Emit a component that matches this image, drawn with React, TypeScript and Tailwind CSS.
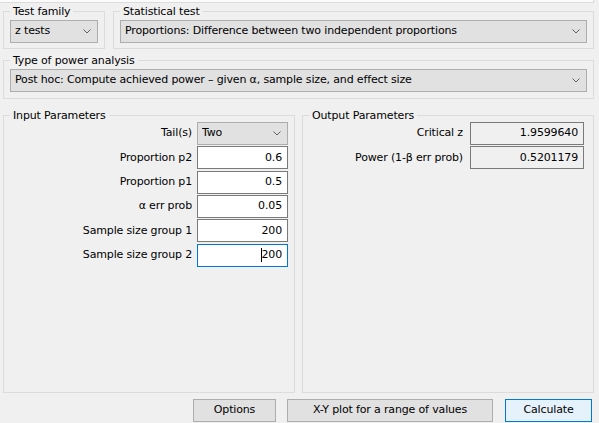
import React from "react"

const font = { fontFamily: '"DejaVu Sans", Tahoma, sans-serif' }

function Chevron() {
  return (
    <svg width="8" height="5" viewBox="0 0 8 5" className="shrink-0">
      <path d="M0.5 0.5 L4 4 L7.5 0.5" fill="none" stroke="#606060" strokeWidth="1" />
    </svg>
  )
}

function Combo({ value, className = "" }: { value: string; className?: string }) {
  return (
    <div
      className={`flex h-[23px] items-center justify-between border border-[#adadad] bg-[#e1e1e1] pl-[4px] pr-[6px] ${className}`}
    >
      <span className="truncate">{value}</span>
      <Chevron />
    </div>
  )
}

function Group({ title, className = "", children }: { title: string; className?: string; children: React.ReactNode }) {
  return (
    <fieldset className={`border border-[#dcdcdc] px-[6px] ${className}`}>
      <legend className="px-[3px] leading-[13px]">{title}</legend>
      {children}
    </fieldset>
  )
}

function Field({ value, focused = false }: { value: string; focused?: boolean }) {
  return (
    <div
      className={`flex h-[23px] items-center justify-end bg-white pr-[5px] ${
        focused ? "border border-[#0078d7]" : "border border-[#7a7a7a]"
      }`}
    >
      {focused && <span className="mr-[-1px] h-[14px] border-l border-black" />}
      <span>{value}</span>
    </div>
  )
}

function OutField({ value }: { value: string }) {
  return (
    <div className="flex h-[23px] items-center justify-end border border-[#7a7a7a] bg-[#f0f0f0] pr-[5px]">
      {value}
    </div>
  )
}

const inputs: [string, string][] = [
  ["Proportion p2", "0.6"],
  ["Proportion p1", "0.5"],
  ["α err prob", "0.05"],
  ["Sample size group 1", "200"],
]

export default function App() {
  return (
    <div
      style={font}
      className="flex h-[423px] w-[599px] flex-col bg-[#f0f0f0] text-[11px] tracking-[-0.15px] text-black"
    >
      <div className="mr-[5px] h-[3px] border-b border-r border-[#dcdcdc] bg-[#fbfbfb]" />

      <div className="mt-[2px] flex gap-[8px] pl-[3px] pr-[5px]">
        <Group title="Test family" className="w-[102px] pb-[5px]">
          <Combo value="z tests" className="mt-[2px]" />
        </Group>
        <Group title="Statistical test" className="flex-1 pb-[5px]">
          <Combo value="Proportions: Difference between two independent proportions" className="mt-[2px]" />
        </Group>
      </div>

      <div className="mt-[5px] pl-[3px] pr-[5px]">
        <Group title="Type of power analysis" className="pb-[6px]">
          <Combo
            value="Post hoc: Compute achieved power – given α, sample size, and effect size"
            className="mt-[2px]"
          />
        </Group>
      </div>

      <div className="mt-[10px] grid grid-cols-2 gap-[7px] pl-[3px] pr-[5px]">
        <Group title="Input Parameters" className="h-[284px]">
          <div className="grid grid-cols-[1fr_91px] items-center gap-x-[5px] gap-y-[1.33px]">
            <span className="text-right">Tail(s)</span>
            <Combo value="Two" />
            {inputs.map(([label, value]) => (
              <React.Fragment key={label}>
                <span className="text-right">{label}</span>
                <Field value={value} />
              </React.Fragment>
            ))}
            <span className="text-right">Sample size group 2</span>
            <Field value="200" focused />
          </div>
        </Group>
        <Group title="Output Parameters" className="h-[284px]">
          <div className="grid grid-cols-[1fr_114px] items-center gap-x-[7px] gap-y-[1.33px] pr-[3px]">
            <span className="text-right">Critical z</span>
            <OutField value="1.9599640" />
            <span className="text-right">Power (1-β err prob)</span>
            <OutField value="0.5201179" />
          </div>
        </Group>
      </div>

      <div className="mt-[6px] flex justify-end pr-[7px]">
        <button className="h-[23px] w-[83px] border border-[#adadad] bg-[#e1e1e1]">Options</button>
        <button className="ml-[11px] h-[23px] w-[206px] border border-[#adadad] bg-[#e1e1e1]">
          X-Y plot for a range of values
        </button>
        <button className="ml-[12px] h-[23px] w-[87px] border border-[#0078d7] bg-[#e5f1fb]">Calculate</button>
      </div>
    </div>
  )
}
